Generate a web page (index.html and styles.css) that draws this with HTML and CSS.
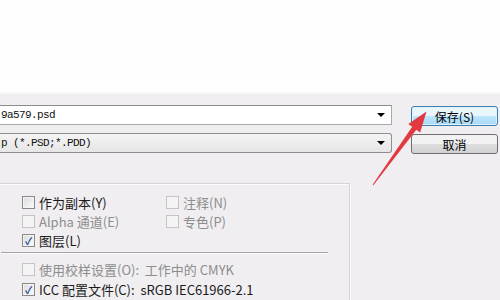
FILE: index.html
```html
<!DOCTYPE html>
<html lang="zh-CN">
<head>
    <meta charset="UTF-8">
    <title>存储为</title>
    <link rel="stylesheet" href="styles.css">
</head>
<body>

    <div class="top"></div>

    <div class="dialog">
        <div class="file-row">
            <div class="fields">
                <div class="combo edit">
                    <span class="value">9a579.psd</span>
                    <i class="caret"></i>
                </div>
                <div class="combo select">
                    <span class="value">p (*.PSD;*.PDD)</span>
                    <i class="caret"></i>
                </div>
            </div>
            <div class="buttons">
                <button class="btn hot">保存(S)</button>
                <button class="btn">取消</button>
            </div>
        </div>

        <div class="options">
            <div class="grid">
                <label class="check"><span class="box"></span>作为副本(Y)</label>
                <label class="check off"><span class="box"></span>注释(N)</label>
                <label class="check off"><span class="box"></span>Alpha 通道(E)</label>
                <label class="check off"><span class="box"></span>专色(P)</label>
                <label class="check"><span class="box on">✓</span>图层(L)</label>
            </div>
            <div class="sep"></div>
            <div class="list">
                <label class="check off"><span class="box"></span>使用校样设置(O):&nbsp; 工作中的 CMYK</label>
                <label class="check"><span class="box on">✓</span>ICC 配置文件(C):&nbsp; sRGB IEC61966-2.1</label>
            </div>
        </div>
    </div>

    <!-- red callout arrow pointing at the save button -->
    <svg class="arrow" width="500" height="300" viewBox="0 0 500 300">
        <polygon fill="#e13a40" points="372.6,184.7 412.2,126.8 408.3,124.0 426.5,111.5 420.2,132.6 416.3,129.7 373.4,185.3"/>
    </svg>

</body>
</html>
```

FILE: styles.css
```css
body {
    margin: 0;
    width: 500px;
    height: 300px;
    overflow: hidden;
    position: relative;
    background-color: #f0eef0;
    font-family: "Noto Sans CJK SC", sans-serif;
    font-size: 13px;
    color: #1b1b1b;
}

.top {
    height: 92px;
    background-color: #fefefe;
    border-bottom: 2px solid #f8f6f8;
}

.dialog {
    padding-top: 10px;
}

.file-row {
    display: flex;
}

.fields {
    width: 392px;
    display: flex;
    flex-direction: column;
    gap: 8px;
}

.combo {
    height: 20px;
    box-sizing: border-box;
    display: flex;
    align-items: center;
    justify-content: space-between;
    padding-right: 6px;
    font-family: "Liberation Mono", monospace;
    font-size: 11px;
    letter-spacing: -0.6px;
    color: #111;
}

.edit {
    margin-top: 1px;
    background-color: #fff;
    border: 1px solid #a9a9a9;
    border-left: none;
    border-top-color: #8c8c8c;
}

.select {
    background: linear-gradient(#f4f4f4, #e6e6e6);
    border: 1px solid #8e8f8f;
    border-left: none;
    border-radius: 0 3px 3px 0;
}

.value {
    padding-left: 1px;
}

.caret {
    width: 0;
    height: 0;
    border-left: 4px solid transparent;
    border-right: 4px solid transparent;
    border-top: 4px solid #000;
}

.buttons {
    margin-left: 19px;
    width: 87px;
    display: flex;
    flex-direction: column;
    gap: 8px;
    padding-top: 2px;
}

.btn {
    height: 20px;
    padding: 0;
    font-family: "Noto Sans CJK SC", sans-serif;
    font-size: 12px;
    color: #000;
    border: 1px solid #707070;
    border-radius: 3px;
    background: linear-gradient(#f2f2f2 50%, #dedede 50%, #d2d2d2);
}

.btn.hot {
    border-color: #3c7fb1;
    background: linear-gradient(#eaf6fd 50%, #bee6fd 50%, #a7d9f5);
    box-shadow: inset 0 0 0 1px #e2f2fb;
}

.options {
    margin-top: 29px;
    margin-left: -2px;
    width: 352px;
    height: 130px;
    box-sizing: border-box;
    border: 1px solid #d6d4d6;
    box-shadow: inset 1px 1px 0 #fbfbfb, 1px 1px 0 #fbfbfb;
    padding: 9px 0 0 23px;
}

.grid {
    display: grid;
    grid-template-columns: 144px auto;
    grid-auto-rows: 19px;
}

.check {
    display: flex;
    align-items: center;
    line-height: 19px;
    white-space: nowrap;
}

.check.off {
    color: #8d8d8d;
}

.box {
    width: 11px;
    height: 11px;
    margin-right: 4px;
    border: 1px solid #8a8a8a;
    background: linear-gradient(135deg, #dcdcdc, #fbfbfb);
    box-shadow: inset 0 0 0 1px #f4f4f4;
    font-size: 10px;
    line-height: 11px;
    text-align: center;
    font-weight: bold;
    color: #21449a;
}

.check.off .box {
    border-color: #c4c4c4;
    background: #f4f4f4;
}

.sep {
    margin: 2px 0 5px -21px;
    width: 327px;
    height: 1px;
    background-color: #a3a3a3;
    border-bottom: 1px solid #fcfcfc;
}

.list {
    display: grid;
    grid-auto-rows: 20px;
}

.arrow {
    position: absolute;
    top: 0;
    left: 0;
    pointer-events: none;
}
```
